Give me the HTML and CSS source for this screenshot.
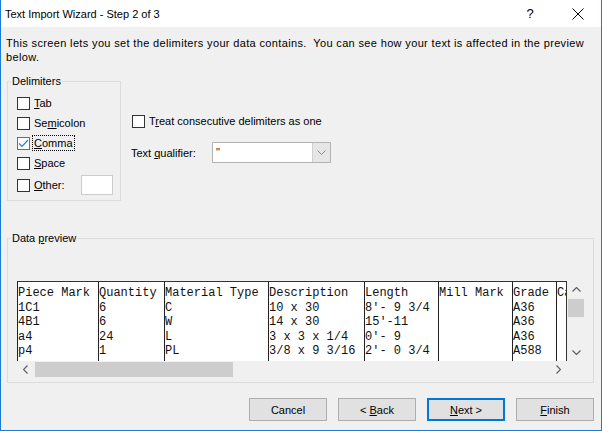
FILE: index.html
```html
<!DOCTYPE html>
<html lang="en">
<head>
  <meta charset="UTF-8">
  <title>Text Import Wizard - Step 2 of 3</title>
  <link rel="stylesheet" href="styles.css">
</head>
<body>
  <div class="window">
    <!-- Title bar -->
    <div class="titlebar">
      <span class="title">Text Import Wizard - Step 2 of 3</span>
      <span class="tb-btn tb-help">?</span>
      <span class="tb-btn tb-close">
        <svg width="12" height="12" viewBox="0 0 12 12"><path d="M0.5 0.5 L11.5 11.5 M11.5 0.5 L0.5 11.5" stroke="#000" stroke-width="1" fill="none"/></svg>
      </span>
    </div>

    <div class="content">
      <p class="intro">This screen lets you set the delimiters your data contains.&nbsp; You can see how your text is affected in the preview<br>below.</p>

      <div class="options">
        <fieldset class="group delimiters">
          <legend>Delimiters</legend>
          <div class="check"><span class="box"></span><span class="lbl"><u>T</u>ab</span></div>
          <div class="check"><span class="box"></span><span class="lbl">Se<u>m</u>icolon</span></div>
          <div class="check">
            <span class="box checked">
              <svg width="11" height="11" viewBox="0 0 11 11"><path d="M1 5.5 L4 8.5 L10 2" stroke="#2a7ad5" stroke-width="1.2" fill="none"/></svg>
            </span>
            <span class="lbl focused"><u>C</u>omma</span>
          </div>
          <div class="check"><span class="box"></span><span class="lbl"><u>S</u>pace</span></div>
          <div class="check other"><span class="box"></span><span class="lbl"><u>O</u>ther:</span><span class="field"></span></div>
        </fieldset>

        <div class="side">
          <div class="check"><span class="box"></span><span class="lbl">T<u>r</u>eat consecutive delimiters as one</span></div>
          <div class="qualifier">
            <span class="q-label">Text <u>q</u>ualifier:</span>
            <div class="combo">
              <span class="combo-value">"</span>
              <span class="combo-drop">
                <svg width="9" height="5" viewBox="0 0 9 5"><path d="M0.5 0.5 L4.5 4.5 L8.5 0.5" stroke="#8a8a8a" stroke-width="1" fill="none"/></svg>
              </span>
            </div>
          </div>
        </div>
      </div>

      <fieldset class="group preview-group">
        <legend>Data <u>p</u>review</legend>
        <div class="preview">
          <div class="grid">
            <div class="col c1"><div>Piece Mark</div><div>1C1</div><div>4B1</div><div>a4</div><div>p4</div></div>
            <div class="col c2"><div>Quantity</div><div>6</div><div>6</div><div>24</div><div>1</div></div>
            <div class="col c3"><div>Material Type</div><div>C</div><div>W</div><div>L</div><div>PL</div></div>
            <div class="col c4"><div>Description</div><div>10 x 30</div><div>14 x 30</div><div>3 x 3 x 1/4</div><div>3/8 x 9 3/16</div></div>
            <div class="col c5"><div>Length</div><div>8'- 9 3/4</div><div>15'-11</div><div>0'- 9</div><div>2'- 0 3/4</div></div>
            <div class="col c6"><div>Mill Mark</div></div>
            <div class="col c7"><div>Grade</div><div>A36</div><div>A36</div><div>A36</div><div>A588</div></div>
            <div class="col c8"><div>Ca</div></div>
          </div>
          <div class="vscroll">
            <span class="arrow">
              <svg width="9" height="5" viewBox="0 0 9 5"><path d="M0.5 4.5 L4.5 0.5 L8.5 4.5" stroke="#606060" stroke-width="1.2" fill="none"/></svg>
            </span>
            <span class="v-thumb"></span>
            <span class="arrow down">
              <svg width="9" height="5" viewBox="0 0 9 5"><path d="M0.5 0.5 L4.5 4.5 L8.5 0.5" stroke="#606060" stroke-width="1.2" fill="none"/></svg>
            </span>
          </div>
          <div class="hscroll">
            <span class="arrow">
              <svg width="5" height="9" viewBox="0 0 5 9"><path d="M4.5 0.5 L0.5 4.5 L4.5 8.5" stroke="#606060" stroke-width="1.2" fill="none"/></svg>
            </span>
            <span class="h-thumb"></span>
            <span class="arrow right">
              <svg width="5" height="9" viewBox="0 0 5 9"><path d="M0.5 0.5 L4.5 4.5 L0.5 8.5" stroke="#606060" stroke-width="1.2" fill="none"/></svg>
            </span>
          </div>
          <div class="corner"></div>
        </div>
      </fieldset>

      <div class="buttons">
        <button class="btn">Cancel</button>
        <button class="btn">&lt; <u>B</u>ack</button>
        <button class="btn default"><u>N</u>ext &gt;</button>
        <button class="btn"><u>F</u>inish</button>
      </div>
    </div>
  </div>
</body>
</html>
```

FILE: styles.css
```css
body {
  margin: 0;
  font-family: "Liberation Sans", Arial, sans-serif;
  font-size: 11px;
  color: #000;
  background: #fff;
}
.window {
  width: 602px;
  height: 431px;
  box-sizing: border-box;
  border: 1px solid #1c7bd5;
  border-top: none;
  background: #f0f0f0;
  display: flex;
  flex-direction: column;
}
.titlebar {
  height: 27px;
  background: #fff;
  display: flex;
  align-items: center;
  font-size: 11px;
}
.title {
  flex: 1;
  padding-left: 4px;
}
.tb-btn {
  width: 46px;
  height: 27px;
  display: flex;
  align-items: center;
  justify-content: center;
}
.tb-help {
  font-size: 13px;
  margin-right: 2px;
}
.content {
  padding: 0 7px 0 6px;
}
.intro {
  margin: 9px 0 0 -1px;
  line-height: 14px;
  letter-spacing: 0.35px;
  white-space: nowrap;
}
.options {
  display: flex;
  margin-top: 10px;
}
.group {
  margin: 0;
  border: 1px solid #dcdcdc;
  min-width: 0;
}
.group legend {
  padding: 0 1px;
  line-height: 14px;
}
.delimiters {
  width: 114px;
  box-sizing: border-box;
  padding: 5px 7px 5px 3px;
}
.check {
  display: flex;
  align-items: center;
  height: 20px;
  padding-left: 6px;
}
.box {
  width: 13px;
  height: 13px;
  box-sizing: border-box;
  border: 1px solid #333;
  background: #fff;
  display: flex;
  align-items: center;
  justify-content: center;
}
.box.checked {
  border-color: #2a7ad5;
}
.lbl {
  margin-left: 4px;
  line-height: 14px;
}
.lbl.focused {
  outline: 1px dotted #000;
  padding: 0 1px;
  margin-left: 3px;
}
.check.other {
  margin-top: 2px;
}
.field {
  margin-left: auto;
  width: 32px;
  height: 20px;
  box-sizing: border-box;
  border: 1px solid #ccc;
  background: #fff;
}
.side {
  margin-left: 10px;
  padding-top: 37px;
}
.side .check {
  padding-left: 1px;
}
.qualifier {
  display: flex;
  align-items: center;
  margin-top: 11px;
  height: 21px;
}
.q-label {
  width: 81px;
}
.combo {
  width: 119px;
  height: 21px;
  box-sizing: border-box;
  border: 1px solid #b4b4b4;
  background: #fff;
  display: flex;
}
.combo-value {
  flex: 1;
  padding-left: 3px;
  line-height: 18px;
  color: #222;
}
.combo-drop {
  width: 17px;
  background: #e6e6e6;
  border-left: 1px solid #d0d0d0;
  display: flex;
  align-items: center;
  justify-content: center;
}
.preview-group {
  margin-top: 30px;
  padding: 36px 0 4px 3px;
}
.preview {
  margin-left: 6px;
  width: 568px;
  display: grid;
  grid-template-columns: 550px 18px;
  grid-template-rows: 80px 17px;
}
.grid {
  display: flex;
  background: #fff;
  border-top: 1px solid #333;
  border-right: 1px solid #333;
  overflow: hidden;
  padding-top: 4px;
  font-family: "Liberation Mono", "Courier New", monospace;
  font-size: 12px;
  line-height: 14.5px;
  color: #111;
}
.col {
  box-sizing: border-box;
  border-left: 1px solid #222;
  margin-top: -4px;
  padding-top: 4px;
  white-space: nowrap;
  overflow: hidden;
  flex-shrink: 0;
}
.c1 { width: 81px; }
.c2 { width: 66px; }
.c3 { width: 104px; }
.c4 { width: 96px; }
.c5 { width: 74px; }
.c6 { width: 74px; }
.c7 { width: 44px; }
.c8 { flex: 1; flex-shrink: 1; }
.vscroll {
  display: flex;
  flex-direction: column;
  background: #f0f0f0;
}
.vscroll .arrow {
  height: 17px;
  display: flex;
  align-items: center;
  justify-content: center;
}
.vscroll .arrow.down {
  margin-top: auto;
}
.v-thumb {
  margin: 1px 1px 0 1px;
  height: 18px;
  background: #cdcdcd;
}
.hscroll {
  display: flex;
  align-items: center;
  background: #f0f0f0;
}
.hscroll .arrow {
  width: 17px;
  height: 17px;
  display: flex;
  align-items: center;
  justify-content: center;
}
.hscroll .arrow.right {
  margin-left: auto;
}
.h-thumb {
  margin-left: 1px;
  width: 198px;
  height: 15px;
  background: #cdcdcd;
}
.corner {
  background: #f0f0f0;
}
.buttons {
  display: flex;
  justify-content: flex-end;
  gap: 11px;
  margin-top: 15px;
}
.btn {
  width: 78px;
  height: 23px;
  box-sizing: border-box;
  border: 1px solid #adadad;
  background: #e1e1e1;
  font: inherit;
  color: #000;
  padding: 0;
}
.btn.default {
  border: 2px solid #0078d7;
}
```
